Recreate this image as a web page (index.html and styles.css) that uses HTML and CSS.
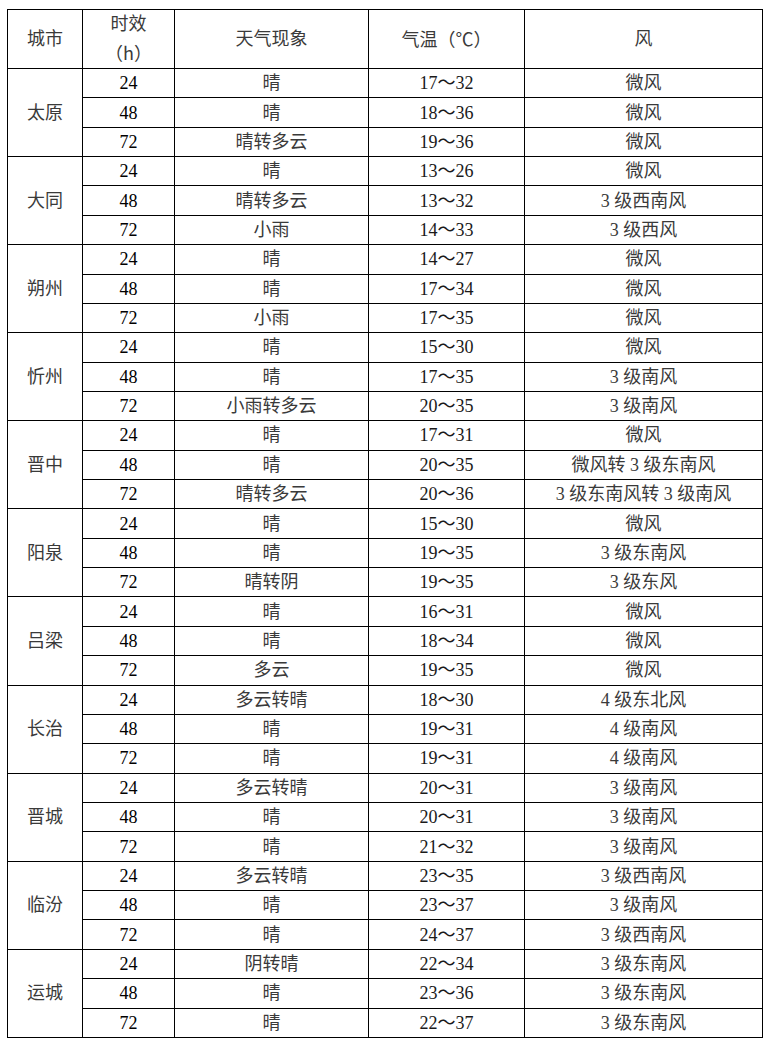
FILE: index.html
```html
<!DOCTYPE html>
<html lang="zh-CN">
<head>
<meta charset="utf-8">
<title>山西天气预报</title>
<link rel="stylesheet" href="styles.css">
</head>
<body>
<table class="wx">
<colgroup>
<col class="c-city"><col class="c-h"><col class="c-sky"><col class="c-temp"><col class="c-wind">
</colgroup>
<thead>
<tr class="head"><th>城市</th><th>时效<br><span class="cjk">（h）</span></th><th>天气现象</th><th>气温<span class="cjk">（℃）</span></th><th>风</th></tr>
</thead>
<tbody>
<tr><td rowspan="3" class="city">太原</td><td class="h">24</td><td>晴</td><td class="t">17～32</td><td>微风</td></tr>
<tr><td class="h">48</td><td>晴</td><td class="t">18～36</td><td>微风</td></tr>
<tr><td class="h">72</td><td>晴转多云</td><td class="t">19～36</td><td>微风</td></tr>

<tr><td rowspan="3" class="city">大同</td><td class="h">24</td><td>晴</td><td class="t">13～26</td><td>微风</td></tr>
<tr><td class="h">48</td><td>晴转多云</td><td class="t">13～32</td><td>3 级西南风</td></tr>
<tr><td class="h">72</td><td>小雨</td><td class="t">14～33</td><td>3 级西风</td></tr>

<tr><td rowspan="3" class="city">朔州</td><td class="h">24</td><td>晴</td><td class="t">14～27</td><td>微风</td></tr>
<tr><td class="h">48</td><td>晴</td><td class="t">17～34</td><td>微风</td></tr>
<tr><td class="h">72</td><td>小雨</td><td class="t">17～35</td><td>微风</td></tr>

<tr><td rowspan="3" class="city">忻州</td><td class="h">24</td><td>晴</td><td class="t">15～30</td><td>微风</td></tr>
<tr><td class="h">48</td><td>晴</td><td class="t">17～35</td><td>3 级南风</td></tr>
<tr><td class="h">72</td><td>小雨转多云</td><td class="t">20～35</td><td>3 级南风</td></tr>

<tr><td rowspan="3" class="city">晋中</td><td class="h">24</td><td>晴</td><td class="t">17～31</td><td>微风</td></tr>
<tr><td class="h">48</td><td>晴</td><td class="t">20～35</td><td>微风转 3 级东南风</td></tr>
<tr><td class="h">72</td><td>晴转多云</td><td class="t">20～36</td><td>3 级东南风转 3 级南风</td></tr>

<tr><td rowspan="3" class="city">阳泉</td><td class="h">24</td><td>晴</td><td class="t">15～30</td><td>微风</td></tr>
<tr><td class="h">48</td><td>晴</td><td class="t">19～35</td><td>3 级东南风</td></tr>
<tr><td class="h">72</td><td>晴转阴</td><td class="t">19～35</td><td>3 级东风</td></tr>

<tr><td rowspan="3" class="city">吕梁</td><td class="h">24</td><td>晴</td><td class="t">16～31</td><td>微风</td></tr>
<tr><td class="h">48</td><td>晴</td><td class="t">18～34</td><td>微风</td></tr>
<tr><td class="h">72</td><td>多云</td><td class="t">19～35</td><td>微风</td></tr>

<tr><td rowspan="3" class="city">长治</td><td class="h">24</td><td>多云转晴</td><td class="t">18～30</td><td>4 级东北风</td></tr>
<tr><td class="h">48</td><td>晴</td><td class="t">19～31</td><td>4 级南风</td></tr>
<tr><td class="h">72</td><td>晴</td><td class="t">19～31</td><td>4 级南风</td></tr>

<tr><td rowspan="3" class="city">晋城</td><td class="h">24</td><td>多云转晴</td><td class="t">20～31</td><td>3 级南风</td></tr>
<tr><td class="h">48</td><td>晴</td><td class="t">20～31</td><td>3 级南风</td></tr>
<tr><td class="h">72</td><td>晴</td><td class="t">21～32</td><td>3 级南风</td></tr>

<tr><td rowspan="3" class="city">临汾</td><td class="h">24</td><td>多云转晴</td><td class="t">23～35</td><td>3 级西南风</td></tr>
<tr><td class="h">48</td><td>晴</td><td class="t">23～37</td><td>3 级南风</td></tr>
<tr><td class="h">72</td><td>晴</td><td class="t">24～37</td><td>3 级西南风</td></tr>

<tr><td rowspan="3" class="city">运城</td><td class="h">24</td><td>阴转晴</td><td class="t">22～34</td><td>3 级东南风</td></tr>
<tr><td class="h">48</td><td>晴</td><td class="t">23～36</td><td>3 级东南风</td></tr>
<tr><td class="h">72</td><td>晴</td><td class="t">22～37</td><td>3 级东南风</td></tr>
</tbody>
</table>
</body>
</html>
```

FILE: styles.css
```css
html, body {
  margin: 0;
  padding: 0;
  background: #fff;
}

body {
  font-family: "Liberation Serif", "Noto Sans CJK SC", serif;
  font-size: 18px;
  color: #3a3a3a;
}

.wx {
  margin: 9px 0 0 7px;
  width: 755px;
  border-collapse: collapse;
  table-layout: fixed;
}

.c-city { width: 75px; }
.c-h { width: 92px; }
.c-sky { width: 194px; }
.c-temp { width: 156px; }
.c-wind { width: 238px; }

.wx th,
.wx td {
  border: 1.3px solid #000;
  padding: 0;
  text-align: center;
  vertical-align: middle;
  font-weight: normal;
  line-height: 28px;
  white-space: nowrap;
}

.wx .head th {
  height: 57px;
}

.wx tbody tr {
  height: 29.36px;
}

.cjk {
  font-family: "Noto Sans CJK SC", sans-serif;
}

.wx td.t {
  color: #1a1a1a;
}

.wx td.h {
  color: #000;
}
```
